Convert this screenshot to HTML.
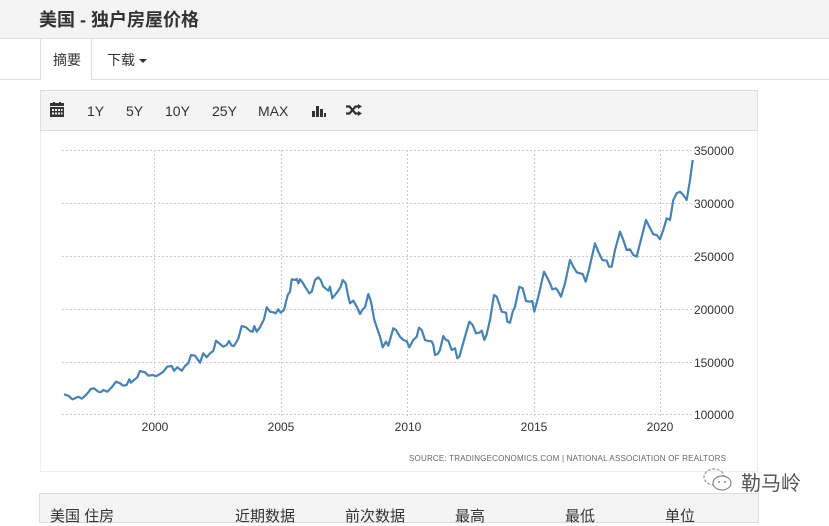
<!DOCTYPE html>
<html><head><meta charset="utf-8"><style>
*{margin:0;padding:0;box-sizing:border-box}
body{width:829px;height:515px;overflow:hidden;background:#fff;font-family:"Liberation Sans","Noto Sans CJK SC",sans-serif;color:#333;position:relative}
.abs{position:absolute}
</style></head><body>
<div class="abs" style="left:0;top:0;width:829px;height:39px;background:#f4f4f4;border-bottom:1px solid #ddd"></div>
<div class="abs" style="left:39px;top:6px;font-size:18px;font-weight:bold;color:#333">美国 - 独户房屋价格</div>
<div class="abs" style="left:0;top:79px;width:829px;height:1px;background:#ddd"></div>
<div class="abs" style="left:40px;top:39px;width:52px;height:41px;background:#fff;border-left:1px solid #ddd;border-right:1px solid #ddd"></div>
<div class="abs" style="left:53px;top:50px;font-size:14px">摘要</div>
<div class="abs" style="left:107px;top:50px;font-size:14px">下载 <span style="display:inline-block;width:0;height:0;border-left:4px solid transparent;border-right:4px solid transparent;border-top:4px solid #333;vertical-align:middle"></span></div>

<div class="abs" style="left:40px;top:90px;width:718px;height:41px;background:#f4f4f4;border:1px solid #ddd"></div>
<svg class="abs" style="left:50px;top:102px" width="14" height="15" viewBox="0 0 14 15"><rect x="0" y="1" width="14" height="3" fill="#333"/><rect x="0" y="5" width="14" height="10" fill="#333"/><g fill="#f4f4f4"><rect x="2" y="7" width="2" height="2"/><rect x="5" y="7" width="2" height="2"/><rect x="8" y="7" width="2" height="2"/><rect x="11" y="7" width="1.5" height="2"/><rect x="2" y="10.5" width="2" height="2"/><rect x="5" y="10.5" width="2" height="2"/><rect x="8" y="10.5" width="2" height="2"/><rect x="11" y="10.5" width="1.5" height="2"/></g><rect x="3" y="0" width="2" height="2" fill="#333"/><rect x="9" y="0" width="2" height="2" fill="#333"/></svg>
<div class="abs" style="left:87px;top:103px;font-size:14px;color:#333">1Y</div>
<div class="abs" style="left:126px;top:103px;font-size:14px">5Y</div>
<div class="abs" style="left:165px;top:103px;font-size:14px">10Y</div>
<div class="abs" style="left:212px;top:103px;font-size:14px">25Y</div>
<div class="abs" style="left:258px;top:103px;font-size:14px">MAX</div>
<svg class="abs" style="left:312px;top:103px" width="14" height="14"><rect x="0" y="8" width="3" height="6" fill="#333"/><rect x="4" y="3" width="3" height="11" fill="#333"/><rect x="8" y="6" width="3" height="8" fill="#333"/><rect x="12" y="10" width="2" height="4" fill="#333"/></svg>
<svg class="abs" style="left:346px;top:104px" width="16" height="12" viewBox="0 0 16 12"><path d="M0 2.5h3.5l6 7h3" stroke="#333" stroke-width="2.2" fill="none"/><path d="M0 9.5h3.5l6-7h3" stroke="#333" stroke-width="2.2" fill="none"/><path d="M12 0l4 2.5-4 2.5zM12 7l4 2.5-4 2.5z" fill="#333"/></svg>

<div class="abs" style="left:40px;top:131px;width:718px;height:341px;border:1px solid #eee;border-top:none"></div>
<svg class="abs" style="left:0;top:0" width="829" height="515">
<g stroke="#ccc" stroke-dasharray="2,2" stroke-width="1">
<line x1="62" y1="150.5" x2="695" y2="150.5"/><line x1="62" y1="203.5" x2="695" y2="203.5"/><line x1="62" y1="256.5" x2="695" y2="256.5"/><line x1="62" y1="309.5" x2="695" y2="309.5"/><line x1="62" y1="362.5" x2="695" y2="362.5"/><line x1="62" y1="414.5" x2="695" y2="414.5"/>
<line x1="154.5" y1="150" x2="154.5" y2="418"/><line x1="281.5" y1="150" x2="281.5" y2="418"/><line x1="407.5" y1="150" x2="407.5" y2="418"/><line x1="534.5" y1="150" x2="534.5" y2="418"/><line x1="660.5" y1="150" x2="660.5" y2="418"/>
</g>
<g font-size="12" fill="#333" text-anchor="end" font-family="Liberation Sans">
<text x="734" y="155">350000</text><text x="734" y="208">300000</text><text x="734" y="261">250000</text><text x="734" y="314">200000</text><text x="734" y="367">150000</text><text x="734" y="419">100000</text>
</g>
<g font-size="12" fill="#333" text-anchor="middle" font-family="Liberation Sans">
<text x="155" y="431">2000</text><text x="281" y="431">2005</text><text x="408" y="431">2010</text><text x="534" y="431">2015</text><text x="660" y="431">2020</text>
</g>
<text x="726" y="461" font-size="8" fill="#666" text-anchor="end" textLength="317" lengthAdjust="spacing" font-family="Liberation Sans">SOURCE: TRADINGECONOMICS.COM | NATIONAL ASSOCIATION OF REALTORS</text>
<path id="ln" fill="none" stroke="#4682b4" stroke-width="2.2" stroke-linejoin="round"/>
</svg>
<script>
var a=[102,403,115,407,127,418,135,415,145,410,155,416,165,408,175,397,182,387,192,385,205,395,212,397,220,390,232,395,245,382,258,365,270,370,280,377,290,375,298,358,303,368,312,360,322,352,330,333,345,337,355,347,368,345,378,349,390,342,400,335,412,320,425,318,432,332,442,322,455,332,465,318,475,310,483,285,495,287,510,308,520,280,530,292,540,280,550,273,558,242,570,252,580,260,590,255,597,243,605,257,612,258,625,236,635,198,648,202,660,213,668,215,673,198,680,215,690,202,702,178,710,142,720,155,730,157,737,160,745,148,752,158,762,150,773,105,780,95,785,58,795,60,800,57,805,70,810,58,818,68,825,80,838,100,845,95,855,60,865,52,872,60,880,80,895,92,900,80,907,115,915,105,925,92,932,80,938,60,947,70,955,110,960,130,970,122,980,140,990,162,998,148,1005,142,1015,102,1023,125,1033,180,1043,210,1050,230,1058,262,1068,245,1075,257,1090,205,1098,210,1110,230];
var b=[0,585,10,600,20,603,28,622,40,600,50,590,57,563,65,570,75,600,85,603,95,604,100,615,105,645,113,642,120,630,130,588,138,600,145,602,155,630,165,625,172,655,178,650,185,625,195,590,208,545,218,555,228,580,238,578,245,572,253,600,260,583,270,540,282,465,290,470,297,490,305,515,318,518,322,545,330,548,338,515,345,500,358,440,368,445,378,483,390,485,397,483,403,515,415,470,432,395,440,410,450,430,457,448,468,445,475,455,483,470,495,430,510,360,520,380,530,397,540,400,548,402,557,425,568,385,585,310,595,335,607,360,620,362,627,380,635,380,645,330,660,275,670,300,680,330,690,328,700,345,710,350,720,310,738,240,748,260,760,283,770,285,780,298,790,270,800,235,810,240,820,180,830,160,840,155,850,165,860,180,870,120,878,60];
var d="";for(var i=0;i<a.length;i+=2){d+=(i?"L":"M")+(30+a[i]/3).toFixed(1)+" "+(260+a[i+1]/3).toFixed(1);}
for(var i=2;i<b.length;i+=2){d+="L"+(400+b[i]/3).toFixed(1)+" "+(140+b[i+1]/3).toFixed(1);}
document.getElementById("ln").setAttribute("d",d);
</script>

<svg class="abs" style="left:703px;top:468px" width="30" height="24" viewBox="0 0 30 24"><ellipse cx="11" cy="9" rx="10" ry="8" fill="none" stroke="#999" stroke-width="1.2" stroke-dasharray="3,1.5"/><ellipse cx="19" cy="15" rx="9" ry="7" fill="#fff" stroke="#888" stroke-width="1.2"/><circle cx="16" cy="14" r="1" fill="#888"/><circle cx="22" cy="14" r="1" fill="#888"/></svg>
<div class="abs" style="left:741px;top:467px;font-size:20px;color:#555">勒马岭</div>

<div class="abs" style="left:39px;top:493px;width:720px;height:30px;background:#f4f4f4;border:1px solid #ddd"></div>
<div class="abs" style="top:505px;left:50px;font-size:15px">美国 住房</div>
<div class="abs" style="top:505px;left:235px;font-size:15px">近期数据</div>
<div class="abs" style="top:505px;left:345px;font-size:15px">前次数据</div>
<div class="abs" style="top:505px;left:455px;font-size:15px">最高</div>
<div class="abs" style="top:505px;left:565px;font-size:15px">最低</div>
<div class="abs" style="top:505px;left:665px;font-size:15px">单位</div>
</body></html>
